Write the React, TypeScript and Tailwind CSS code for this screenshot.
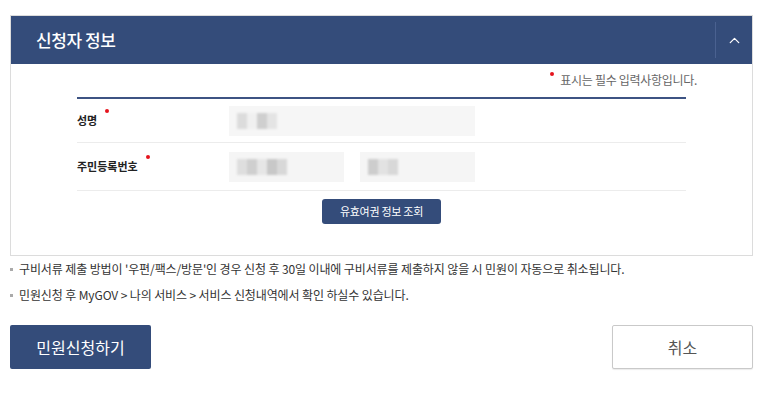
import { ChevronUp } from "lucide-react";

const font = { fontFamily: '"Noto Sans CJK KR", "Noto Sans", sans-serif' };

function Blur({ blocks }: { blocks: string[] }) {
  // pixelated, blurred placeholder for masked personal data
  return (
    <div className="flex items-center gap-0 pl-2 blur-[1px]">
      {blocks.map((c, i) => (
        <div key={i} className={`h-[16px] w-[10px] ${c}`} />
      ))}
    </div>
  );
}

function Required() {
  return <span className="ml-[8px] inline-block h-[4px] w-[4px] -translate-y-[3px] rounded-full bg-[#e5131d] align-top" />;
}

export default function App() {
  return (
    <div className="h-[399px] w-[773px] bg-white text-[#333]" style={font}>
      <div className="pl-[10px] pr-[20px] pt-[15px]">
        {/* 신청자 정보 패널 */}
        <section className="border border-[#dcdcdc]">
          <header className="flex h-[48px] items-center bg-[#344c7a] text-white">
            <h2 className="flex-1 pl-[25px] text-[17px] font-medium tracking-tight">신청자 정보</h2>
            <div className="flex h-[36px] w-[37px] items-center justify-center border-l border-[#4a6190]">
              <ChevronUp size={17} strokeWidth={1.8} className="ml-[1px]" />
            </div>
          </header>

          <div className="px-[66px] pb-[31px] pt-[7px]">
            <p className="-mr-[11px] flex items-start justify-end text-[12px] tracking-tight text-[#666]">
              <span className="mr-[6px] mt-[1px] inline-block h-[4px] w-[4px] rounded-full bg-[#e5131d]" />
              표시는 필수 입력사항입니다.
            </p>

            <div className="mt-[8px] border-t-2 border-[#3d5383]">
              <div className="flex h-[44px] items-center border-b border-[#ececec]">
                <div className="w-[152px] text-[11px] font-bold text-[#222]">
                  성명<Required />
                </div>
                <div className="flex h-[30px] w-[246px] items-center bg-[#f6f6f6]">
                  <Blur blocks={["bg-[#dcdcdc]", "bg-[#f0f0f0]", "bg-[#cfcfcf]", "bg-[#e4e4e4]"]} />
                </div>
              </div>
              <div className="flex h-[48px] items-center border-b border-[#ececec]">
                <div className="w-[152px] text-[11px] font-bold text-[#222]">
                  주민등록번호<Required />
                </div>
                <div className="flex gap-[16px]">
                  <div className="flex h-[30px] w-[115px] items-center bg-[#f5f5f5]">
                    <Blur blocks={["bg-[#dedede]", "bg-[#cfcfcf]", "bg-[#e6e6e6]", "bg-[#c8c8c8]", "bg-[#d8d8d8]"]} />
                  </div>
                  <div className="flex h-[30px] w-[115px] items-center bg-[#f5f5f5]">
                    <Blur blocks={["bg-[#cdcdcd]", "bg-[#e2e2e2]", "bg-[#d8d8d8]"]} />
                  </div>
                </div>
              </div>
            </div>

            <div className="mt-[8px] flex justify-center">
              <button className="h-[25px] w-[119px] rounded-[3px] bg-[#344c7a] text-[11px] tracking-tight text-white">
                유효여권 정보 조회
              </button>
            </div>
          </div>
        </section>

        {/* 안내 문구 */}
        <ul className="mt-[4px] space-y-[8px] text-[12px] tracking-[-0.01em] text-[#333]">
          <li className="flex items-center">
            <span className="mr-[6px] inline-block h-[3px] w-[3px] bg-[#aaa]" />
            구비서류 제출 방법이 '우편/팩스/방문'인 경우 신청 후 30일 이내에 구비서류를 제출하지 않을 시 민원이 자동으로 취소됩니다.
          </li>
          <li className="flex items-center">
            <span className="mr-[6px] inline-block h-[3px] w-[3px] bg-[#aaa]" />
            민원신청 후 MyGOV &gt; 나의 서비스 &gt; 서비스 신청내역에서 확인 하실수 있습니다.
          </li>
        </ul>

        <div className="mt-[21px] flex justify-between">
          <button className="h-[44px] w-[141px] rounded-[2px] bg-[#344c7a] text-[16px] text-white">민원신청하기</button>
          <button className="h-[44px] w-[141px] rounded-[2px] border border-[#c9c9c9] bg-white text-[16px] text-[#555] shadow-[0_1px_1px_rgba(0,0,0,0.08)]">
            취소
          </button>
        </div>
      </div>
    </div>
  );
}
